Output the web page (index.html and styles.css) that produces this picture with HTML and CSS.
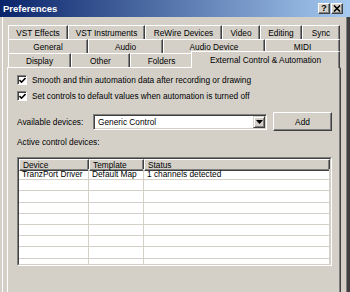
FILE: index.html
```html
<!DOCTYPE html>
<html lang="en">
<head>
    <meta charset="UTF-8">
    <meta name="viewport" content="width=device-width, initial-scale=1.0">
    <title>Preferences</title>
    <link rel="stylesheet" href="styles.css">
</head>
<body>
    <div class="window">
        <!-- title bar -->
        <div class="titlebar">
            <span class="title">Preferences</span>
            <div class="title-btns">
                <span class="tbtn">?</span>
                <span class="tbtn">
                    <svg width="8" height="7" viewBox="0 0 8 7"><path d="M1 0.5 L7 6.5 M7 0.5 L1 6.5" stroke="#000" stroke-width="1.6"/></svg>
                </span>
            </div>
        </div>

        <div class="content">
            <!-- tabs -->
            <div class="tabs">
                <div class="tab-row row-1">
                    <div class="tab">VST Effects</div>
                    <div class="tab">VST Instruments</div>
                    <div class="tab">ReWire Devices</div>
                    <div class="tab">Video</div>
                    <div class="tab">Editing</div>
                    <div class="tab">Sync</div>
                </div>
                <div class="tab-row row-2">
                    <div class="tab">General</div>
                    <div class="tab">Audio</div>
                    <div class="tab">Audio Device</div>
                    <div class="tab">MIDI</div>
                </div>
                <div class="tab-row row-3">
                    <div class="tab">Display</div>
                    <div class="tab">Other</div>
                    <div class="tab">Folders</div>
                    <div class="tab active">External Control &amp; Automation</div>
                </div>
            </div>

            <!-- panel -->
            <div class="panel">
                <label class="check">
                    <span class="box"><svg width="7" height="7" viewBox="0 0 7 7"><polyline points="0.5,3 2.5,5.2 6.5,1" fill="none" stroke="#000" stroke-width="1.6"/></svg></span>
                    Smooth and thin automation data after recording or drawing
                </label>
                <label class="check">
                    <span class="box"><svg width="7" height="7" viewBox="0 0 7 7"><polyline points="0.5,3 2.5,5.2 6.5,1" fill="none" stroke="#000" stroke-width="1.6"/></svg></span>
                    Set controls to default values when automation is turned off
                </label>

                <div class="device-row">
                    <span class="device-label">Available devices:</span>
                    <div class="combo">
                        <span class="combo-text">Generic Control</span>
                        <span class="combo-btn"><svg width="7" height="4" viewBox="0 0 7 4"><polygon points="0,0 7,0 3.5,4" fill="#000"/></svg></span>
                    </div>
                    <button class="btn">Add</button>
                </div>

                <div class="label">Active control devices:</div>

                <div class="list">
                    <div class="list-inner">
                        <div class="list-head">
                            <div class="hcell">Device</div>
                            <div class="hcell">Template</div>
                            <div class="hcell">Status</div>
                        </div>
                        <div class="list-row">
                            <div class="cell">TranzPort Driver</div>
                            <div class="cell">Default Map</div>
                            <div class="cell">1 channels detected</div>
                        </div>
                        <div class="list-row"><div class="cell"></div><div class="cell"></div><div class="cell"></div></div>
                        <div class="list-row"><div class="cell"></div><div class="cell"></div><div class="cell"></div></div>
                        <div class="list-row"><div class="cell"></div><div class="cell"></div><div class="cell"></div></div>
                        <div class="list-row"><div class="cell"></div><div class="cell"></div><div class="cell"></div></div>
                        <div class="list-row"><div class="cell"></div><div class="cell"></div><div class="cell"></div></div>
                        <div class="list-row"><div class="cell"></div><div class="cell"></div><div class="cell"></div></div>
                        <div class="list-row"><div class="cell"></div><div class="cell"></div><div class="cell"></div></div>
                        <div class="list-row"><div class="cell"></div><div class="cell"></div><div class="cell"></div></div>
                    </div>
                </div>
            </div>
        </div>
    </div>
</body>
</html>
```

FILE: styles.css
```css
/*global*/
* {
    margin: 0;
    padding: 0;
    box-sizing: border-box;
}

body {
    background-color: #d4d0c8;
    font-family: "Liberation Sans", Arial, sans-serif;
    font-size: 8.3px;
    color: #000;
}

/*window*/
.window {
    width: 350px;
    height: 292px;
    overflow: hidden;
    background-color: #d4d0c8;
    box-shadow: inset 2px 0 #d4d0c8, inset 3px 0 #fff, inset -3px 0 #404040, inset -4px 0 #808080;
}

.titlebar {
    height: 17px;
    display: flex;
    align-items: center;
    padding: 0 7px 0 3px;
    background: linear-gradient(to right, #0a246a, #a6caf0);
}

.title {
    flex: 1;
    color: #fff;
    font-weight: bold;
    font-size: 9.5px;
}

.title-btns {
    display: flex;
    gap: 1px;
}

.tbtn {
    width: 12px;
    height: 11px;
    display: flex;
    align-items: center;
    justify-content: center;
    background-color: #d4d0c8;
    border: 1px solid;
    border-color: #fff #404040 #404040 #fff;
    box-shadow: inset -1px -1px #808080;
    font-size: 9px;
    font-weight: bold;
    line-height: 1;
}

.content {
    padding: 8px 0 0 7px;
}

/*tabs*/
.tabs {
    width: 332px;
    margin-left: 1px;
}

.tab-row {
    display: grid;
    height: 14px;
}

.row-1 {
    grid-template-columns: 60px 77px 77px 38px 42px 38px;
}

.row-2 {
    grid-template-columns: 80px 75px 102px 75px;
}

.row-3 {
    grid-template-columns: 63px 59px 63px 147px;
}

.tab {
    display: flex;
    align-items: center;
    justify-content: center;
    white-space: nowrap;
    background-color: #d4d0c8;
    border-top: 1px solid #fff;
    border-left: 1px solid #fff;
    border-right: 1px solid #404040;
    box-shadow: inset -1px 0 #808080;
}

.tab.active {
    position: relative;
    z-index: 1;
    margin: -2px 0 -1px -2px;
}

/*panel*/
.panel {
    width: 334px;
    height: 230px;
    padding: 4px 0 0 9px;
    border-top: 1px solid #fff;
    border-left: 1px solid #fff;
    border-right: 1px solid #404040;
    box-shadow: inset -1px 0 #808080;
}

.check {
    display: flex;
    align-items: center;
    gap: 5px;
    height: 16px;
}

.box {
    width: 10px;
    height: 10px;
    display: flex;
    align-items: center;
    justify-content: center;
    background-color: #fff;
    border: 1px solid;
    border-color: #808080 #fff #fff #808080;
    box-shadow: inset 1px 1px #404040;
}

.device-row {
    display: flex;
    align-items: center;
    height: 19px;
    margin-top: 8px;
}

.device-label {
    width: 76px;
}

.combo {
    width: 174px;
    height: 16px;
    display: flex;
    align-items: center;
    padding: 1px 1px 1px 4px;
    background-color: #fff;
    border: 1px solid;
    border-color: #808080 #fff #fff #808080;
    box-shadow: inset 1px 1px #404040, inset -1px -1px #d4d0c8;
}

.combo-text {
    flex: 1;
}

.combo-btn {
    width: 12px;
    height: 12px;
    display: flex;
    align-items: center;
    justify-content: center;
    background-color: #d4d0c8;
    border: 1px solid;
    border-color: #d4d0c8 #404040 #404040 #d4d0c8;
    box-shadow: inset 1px 1px #fff, inset -1px -1px #808080;
}

.btn {
    width: 59px;
    height: 19px;
    margin-left: 6px;
    font: inherit;
    color: #000;
    background-color: #d4d0c8;
    border: 1px solid;
    border-color: #fff #404040 #404040 #fff;
    box-shadow: inset -1px -1px #808080;
}

.label {
    margin-top: 5px;
    height: 12px;
    line-height: 12px;
}

/*list*/
.list {
    width: 315px;
    height: 109px;
    margin-top: 9px;
    border: 1px solid;
    border-color: #808080 #fff #fff #808080;
    overflow: hidden;
}

.list-inner {
    height: 100%;
    overflow: hidden;
    background-color: #fff;
    border: 1px solid;
    border-color: #404040 #d4d0c8 #d4d0c8 #404040;
}

.list-head,
.list-row {
    display: grid;
    grid-template-columns: 70px 55px 1fr;
}

.list-head {
    height: 10px;
}

.hcell {
    display: flex;
    align-items: center;
    padding-left: 3px;
    background-color: #d4d0c8;
    border-top: 1px solid #fff;
    border-left: 1px solid #fff;
    border-right: 1px solid #404040;
    border-bottom: 1px solid #404040;
    box-shadow: inset -1px -1px #808080;
}

.list-row {
    height: 11.2px;
    border-bottom: 1px solid #d4d0c8;
}

.cell {
    display: flex;
    align-items: center;
    padding-left: 3px;
    white-space: nowrap;
    border-right: 1px solid #d4d0c8;
}
```
